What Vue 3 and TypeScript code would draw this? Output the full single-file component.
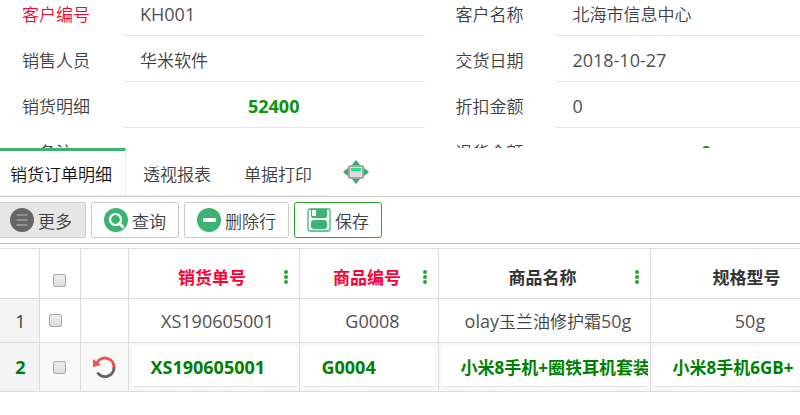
<script setup lang="ts">
import { ref } from 'vue'

interface Field {
  id: string
  label: string
  value: string
  required?: boolean
  total?: boolean
}

interface Column {
  title: string
  required?: boolean
  menu: boolean
}

const fields = ref<Field[]>([
  { id: 'customerNo', label: '客户编号', value: 'KH001', required: true },
  { id: 'customerName', label: '客户名称', value: '北海市信息中心' },
  { id: 'salesman', label: '销售人员', value: '华米软件' },
  { id: 'deliveryDate', label: '交货日期', value: '2018-10-27' },
  { id: 'detailTotal', label: '销货明细', value: '52400', total: true },
  { id: 'discount', label: '折扣金额', value: '0' },
  { id: 'remark', label: '备注', value: '' },
  { id: 'refund', label: '退货金额', value: '0', total: true },
])

const tabs = ['销货订单明细', '透视报表', '单据打印']
const activeTab = ref(0)

const columns: Column[] = [
  { title: '销货单号', required: true, menu: true },
  { title: '商品编号', required: true, menu: true },
  { title: '商品名称', menu: true },
  { title: '规格型号', menu: false },
]

const firstRow = ['XS190605001', 'G0008', 'olay玉兰油修护霜50g', '50g']
const editRow = ref(['XS190605001', 'G0004', '小米8手机+圈铁耳机套装', '小米8手机6GB+'])

// Values without Chinese characters use the larger numeral size
const isLatin = (text: string): boolean => /^[\x20-\x7e]+$/.test(text)

// Splits a mixed text into its Latin and Chinese runs
const runs = (text: string): string[] => text.match(/[\x20-\x7e]+|[^\x20-\x7e]+/g) ?? []
</script>

<template>
  <main class="page">
    <form class="form" @submit.prevent>
      <div class="form-grid">
        <template v-for="f in fields" :key="f.id">
          <label :for="f.id" class="label" :class="{ required: f.required, short: f.label.length < 4 }">{{ f.label }}</label>
          <input :id="f.id" v-model="f.value" type="text" class="field" :class="{ total: f.total, latin: isLatin(f.value) }" />
        </template>
      </div>
    </form>

    <nav class="tabs">
      <button
        v-for="(t, i) in tabs"
        :key="t"
        type="button"
        class="tab"
        :class="{ active: i === activeTab }"
        @click="activeTab = i"
      >{{ t }}</button>
      <button type="button" class="expand" aria-label="展开">
        <svg width="26" height="24" viewBox="0 0 26 24">
          <path d="M13 0l4 5H9zM13 24l-4-5h8zM0 12l5-4v8zM26 12l-5-4v8z" fill="#2fae66" />
          <rect x="6" y="6" width="14" height="12" rx="1" fill="#dcdcdc" stroke="#a6a6a6" stroke-width="2" />
          <rect x="8" y="8" width="10" height="3" fill="#1ee68c" />
        </svg>
      </button>
    </nav>

    <div class="toolbar">
      <button type="button" class="tool more">
        <svg width="24" height="24" viewBox="0 0 24 24">
          <circle cx="12" cy="12" r="12" fill="#666" />
          <path d="M6.500 7h11M6.500 12h11M6.500 17h11" stroke="#919191" stroke-width="2" />
        </svg>
        更多
      </button>
      <button type="button" class="tool">
        <svg width="24" height="24" viewBox="0 0 24 24">
          <circle cx="12" cy="12" r="12" fill="#3cb371" />
          <circle cx="11.500" cy="11.500" r="5.500" fill="none" stroke="#fff" stroke-width="2.200" />
          <path d="M15.800 15.800l3 3" stroke="#fff" stroke-width="3" stroke-linecap="round" />
        </svg>
        查询
      </button>
      <button type="button" class="tool">
        <svg width="24" height="24" viewBox="0 0 24 24">
          <circle cx="12" cy="12" r="12" fill="#3cb371" />
          <rect x="6" y="10" width="13" height="4" rx="1" fill="#fff" />
        </svg>
        删除行
      </button>
      <button type="button" class="tool save">
        <svg width="24" height="24" viewBox="0 0 24 24">
          <rect x="1" y="1" width="22" height="22" rx="2" fill="#fff" stroke="#3cb371" stroke-width="1.300" />
          <path d="M4 1h16v7a2 2 0 0 1-2 2H6a2 2 0 0 1-2-2z" fill="#3cb371" />
          <rect x="5" y="2" width="4" height="6" fill="#fff" />
          <rect x="4" y="12" width="16" height="9" rx="3" fill="#3cb371" />
        </svg>
        保存
      </button>
    </div>

    <div class="grid-wrap">
      <table class="grid">
        <colgroup>
          <col class="c-num" />
          <col class="c-check" />
          <col class="c-undo" />
          <col class="c-order" />
          <col class="c-code" />
          <col class="c-name" />
          <col class="c-spec" />
        </colgroup>
        <thead>
          <tr>
            <th></th>
            <th class="check-head"><input type="checkbox" class="check" aria-label="全选" /></th>
            <th></th>
            <th v-for="c in columns" :key="c.title" class="title-head">
              <div class="head">
                <span class="head-text" :class="{ required: c.required }">{{ c.title }}</span>
                <svg v-if="c.menu" class="dots" width="4" height="14" viewBox="0 0 4 14" fill="#2ba52b">
                  <circle cx="2" cy="2" r="2" />
                  <circle cx="2" cy="7" r="2" />
                  <circle cx="2" cy="12" r="2" />
                </svg>
              </div>
            </th>
          </tr>
        </thead>
        <tbody>
          <tr class="plain">
            <td class="num">1</td>
            <td class="check-cell"><input type="checkbox" class="check" aria-label="选择第1行" /></td>
            <td></td>
            <td v-for="v in firstRow" :key="v" class="text"><span v-for="(r, i) in runs(v)" :key="i" :class="{ latin: isLatin(r) }">{{ r }}</span></td>
          </tr>
          <tr class="editing">
            <td class="num">2</td>
            <td><input type="checkbox" class="check" aria-label="选择第2行" /></td>
            <td>
              <button type="button" class="undo" aria-label="撤销">
                <svg width="24" height="24" viewBox="0 0 24 24" fill="none" stroke-width="3">
                  <path d="M5 8A9 9 0 0 1 22 12" stroke="#ef5350" />
                  <path d="M22 12A9 9 0 0 1 5.500 17.500" stroke="#666" />
                  <path d="M1 4v8l8-2z" fill="#ef5350" />
                </svg>
              </button>
            </td>
            <td v-for="(v, i) in editRow" :key="i" class="edit">
              <input v-model="editRow[i]" type="text" class="cell-input" :class="{ latin: isLatin(v) }" :aria-label="columns[i].title" />
            </td>
          </tr>
        </tbody>
      </table>
    </div>
  </main>
</template>

<style>
body {
  background: #fff;
}
</style>

<style scoped>
.page,
.page button,
.page input {
  font-family: "Open Sans", "Noto Sans CJK SC", sans-serif;
  font-size: 17px;
  font-weight: 350;
  color: #404040;
}
.page {
  overflow: hidden;
}
.page *,
.page {
  box-sizing: border-box;
}
.page .latin {
  font-size: 18px;
  font-weight: 400;
  color: #505050;
}
.page .required {
  color: #ff0033;
}

/* Order header form */
.form {
  height: 148px;
  overflow: hidden;
}
.form-grid {
  display: grid;
  grid-template-columns: 100px 39% 129px 39%;
  grid-auto-rows: 46px;
  margin-top: -8px;
  padding-left: 22px;
}
.label {
  line-height: 46px;
}
.label:nth-of-type(even) {
  padding-left: 30px;
}
.label.short {
  padding-left: 17px;
}
.field {
  width: 100%;
  height: 44px;
  padding: 0 18px;
  border: 0;
  border-bottom: 1px solid #e6e6e6;
  border-radius: 3px;
  background: transparent;
  outline: 0;
}
.page .field.total {
  text-align: center;
  font-weight: 700;
  color: #0b930b;
}

/* Tabs */
.tabs {
  display: flex;
  height: 49px;
  border-bottom: 1px solid #ccc;
}
.tab {
  padding: 0 16px 0 17px;
  border: 0;
  border-top: 3px solid transparent;
  border-bottom: 1px solid #eee;
  background: none;
}
.page .tab.active {
  padding: 0 13px 0 10px;
  border-top-color: #3cb371;
  border-right: 1px solid #eee;
  color: #111;
}
.expand {
  display: flex;
  align-items: center;
  padding: 0 15px;
  border: 0;
  background: none;
}

/* Toolbar */
.toolbar {
  display: flex;
  gap: 5px;
  padding: 5px 0;
  border-bottom: 1px solid #bbb;
}
.tool {
  display: flex;
  align-items: center;
  gap: 4px;
  height: 36px;
  padding: 0 12px;
  border: 1px solid #ccc;
  border-radius: 3px;
  background: #fff;
}
.tool.more {
  padding: 0 13px 0 10px;
  border-left: 0;
  border-radius: 0 3px 3px 0;
  background: #e6e6e6;
}
.tool.save {
  border-color: #2ba52b;
}

/* Detail table */
.grid-wrap {
  margin-top: 4px;
  overflow: hidden;
}
.grid {
  width: 842px;
  border-collapse: collapse;
  table-layout: fixed;
}
.c-num { width: 39px; }
.c-check { width: 41px; }
.c-undo { width: 48px; }
.c-order { width: 171px; }
.c-code { width: 139px; }
.c-name { width: 212px; }
.c-spec { width: 192px; }
th,
td {
  padding: 0;
  border: 1px solid #ddd;
  text-align: center;
  white-space: nowrap;
}
th:first-child,
td:first-child {
  border-left: 0;
}
thead tr { height: 50px; }
.plain { height: 44px; }
.editing { height: 49px; background: #f9f9f9; }
.title-head {
  padding-top: 6px;
}
.check-head {
  padding-top: 14px;
}
.head {
  display: flex;
  align-items: center;
  padding: 0 11px 0 12px;
}
.head-text {
  flex: 1;
  font-weight: 700;
  color: #333;
}
.page .num {
  padding-right: 13px;
  background: #f4f4f4;
  text-align: right;
  font-size: 18px;
  font-weight: 400;
}
.page .editing .num {
  font-weight: 700;
  color: #008000;
}
.text {
  padding-left: 8px;
}
.check {
  appearance: none;
  display: block;
  width: 13px;
  height: 13px;
  margin: 0 auto;
  border: 1px solid #aaa;
  border-radius: 2px;
  background: linear-gradient(#eee, #dcdcdc);
}
.check-cell {
  padding-right: 8px;
}
.check:checked {
  background: #3cb371;
}
.undo {
  display: block;
  margin: 0 auto;
  padding: 0;
  border: 0;
  background: none;
}
.undo svg {
  display: block;
}
.edit {
  padding: 0 2px 0 3px;
}
.cell-input {
  display: block;
  width: 100%;
  height: 40px;
  padding: 0 0 0 19px;
  border: 0;
  border-bottom: 1px solid #e2e2e2;
  border-radius: 3px;
  background: #fff;
  outline: 0;
}
.page .cell-input {
  font-weight: 700;
  color: #008000;
}
</style>
